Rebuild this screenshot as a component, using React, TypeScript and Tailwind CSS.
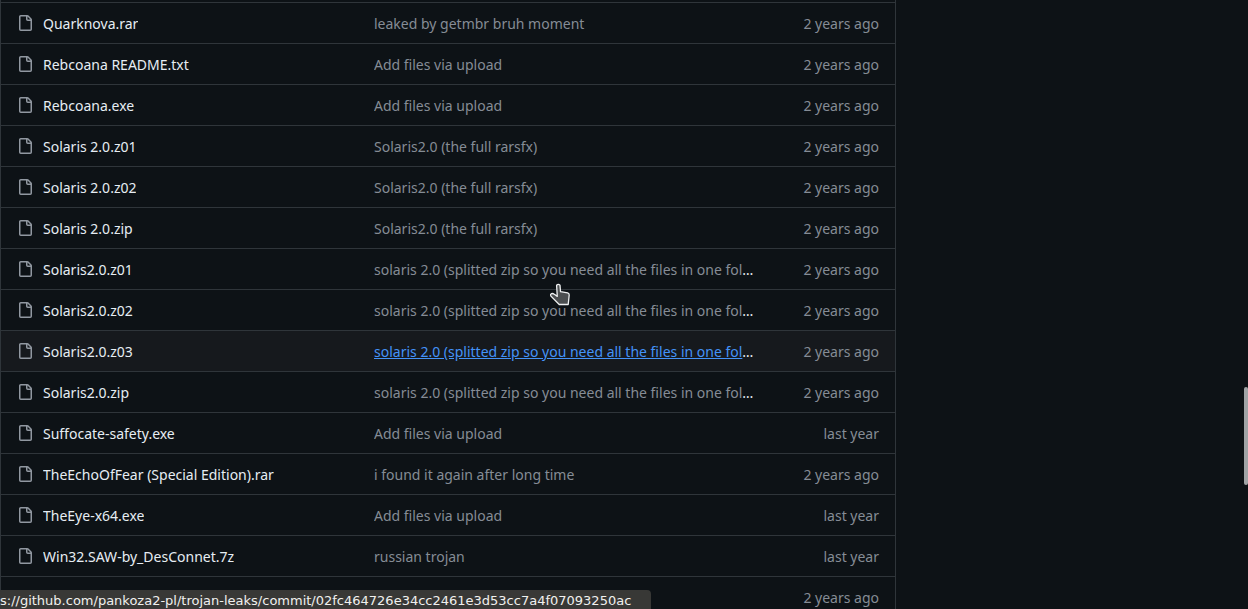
type Entry = {
  name: string;
  message: string;
  date: string;
  active?: boolean;
};

const splitMessage =
  'solaris 2.0 (splitted zip so you need all the files in one folder)';

const entries: Entry[] = [
  { name: 'Quarknova.rar', message: 'leaked by getmbr bruh moment', date: '2 years ago' },
  { name: 'Rebcoana README.txt', message: 'Add files via upload', date: '2 years ago' },
  { name: 'Rebcoana.exe', message: 'Add files via upload', date: '2 years ago' },
  { name: 'Solaris 2.0.z01', message: 'Solaris2.0 (the full rarsfx)', date: '2 years ago' },
  { name: 'Solaris 2.0.z02', message: 'Solaris2.0 (the full rarsfx)', date: '2 years ago' },
  { name: 'Solaris 2.0.zip', message: 'Solaris2.0 (the full rarsfx)', date: '2 years ago' },
  { name: 'Solaris2.0.z01', message: splitMessage, date: '2 years ago' },
  { name: 'Solaris2.0.z02', message: splitMessage, date: '2 years ago' },
  { name: 'Solaris2.0.z03', message: splitMessage, date: '2 years ago', active: true },
  { name: 'Solaris2.0.zip', message: splitMessage, date: '2 years ago' },
  { name: 'Suffocate-safety.exe', message: 'Add files via upload', date: 'last year' },
  { name: 'TheEchoOfFear (Special Edition).rar', message: 'i found it again after long time', date: '2 years ago' },
  { name: 'TheEye-x64.exe', message: 'Add files via upload', date: 'last year' },
  { name: 'Win32.SAW-by_DesConnet.7z', message: 'russian trojan', date: 'last year' },
  { name: '', message: '', date: '2 years ago' },
];

function FileIcon() {
  return (
    <svg aria-hidden="true" viewBox="0 0 16 16" className="size-4 shrink-0 fill-[#9198a1]">
      <path d="M2 1.75C2 .784 2.784 0 3.75 0h6.586c.464 0 .909.184 1.237.513l2.914 2.914c.329.328.513.773.513 1.237v9.586A1.75 1.75 0 0 1 13.25 16h-9.5A1.75 1.75 0 0 1 2 14.25Zm1.75-.25a.25.25 0 0 0-.25.25v12.5c0 .138.112.25.25.25h9.5a.25.25 0 0 0 .25-.25V6h-2.75A1.75 1.75 0 0 1 9 4.25V1.5Zm6.75.062V4.25c0 .138.112.25.25.25h2.688l-.011-.013-2.914-2.914-.013-.011Z" />
    </svg>
  );
}

function HandPointer() {
  return (
    <svg
      aria-hidden="true"
      viewBox="0 0 22 23"
      className="pointer-events-none absolute top-[283px] left-[549px] h-[23px] w-[22px]"
    >
      <path
        d="M7.6 2.2Q9.3 .5 11 2.2L11.5 8.6 18.6 9.8Q20.3 10.2 20.2 12L19.2 21.5H10.2L1.7 12.9Q1.1 11.2 2.5 10.6 3.9 10.2 5.3 11.3L8.3 13.4Z"
        fill="#4b4e50"
        stroke="#eef0f1"
        strokeWidth="1.3"
        strokeLinejoin="round"
      />
    </svg>
  );
}

function FileRow({ entry }: { entry: Entry }) {
  return (
    <tr className={entry.active ? 'h-[41px] border-t border-[#2f353a] bg-[#16191d]' : 'h-[41px] border-t border-[#2f353a]'}>
      <td className="p-0 pl-4">
        {entry.name && (
          <div className="flex items-center gap-2.5">
            <FileIcon />
            <a href="#file" className="truncate pt-0.5 text-[#e6edf3]">
              {entry.name}
            </a>
          </div>
        )}
      </td>
      <td className="p-0 pt-0.5 pr-12">
        <div className="truncate text-[#e6edf3]">
          <a href="#commit" className={entry.active ? 'text-[#4493f8] underline' : 'text-[#858c95]'}>
            {entry.message}
          </a>
        </div>
      </td>
      <td className="p-0 pt-0.5 pr-4 text-right whitespace-nowrap text-[#858c95]">{entry.date}</td>
    </tr>
  );
}

export default function App() {
  return (
    <main className="relative h-screen overflow-hidden bg-[#0d1216] font-['Noto_Sans','Open_Sans',sans-serif] text-sm leading-5">
      <div className="w-full max-w-[896px] border-x border-[#2f353a] pt-0.5">
        <table aria-label="Repository files" className="w-full table-fixed border-collapse">
          <colgroup>
            <col className="w-[373px]" />
            <col />
            <col className="w-[92px]" />
          </colgroup>
          <tbody>
            {entries.map((entry, index) => (
              <FileRow key={index} entry={entry} />
            ))}
          </tbody>
        </table>
      </div>

      <HandPointer />

      <div className="absolute top-[387px] right-0 h-[98px] w-1 rounded-sm bg-[#a0a4a6]" />

      <div
        role="status"
        className="absolute bottom-0 left-0 rounded-tr-sm bg-[#383836] pt-0.5 pr-5 font-['DejaVu_Sans',sans-serif] text-[13px] leading-[17px] whitespace-nowrap text-[#f0f0ee]"
      >
        s://github.com/pankoza2-pl/trojan-leaks/commit/02fc464726e34cc2461e3d53cc7a4f07093250ac
      </div>
    </main>
  );
}
